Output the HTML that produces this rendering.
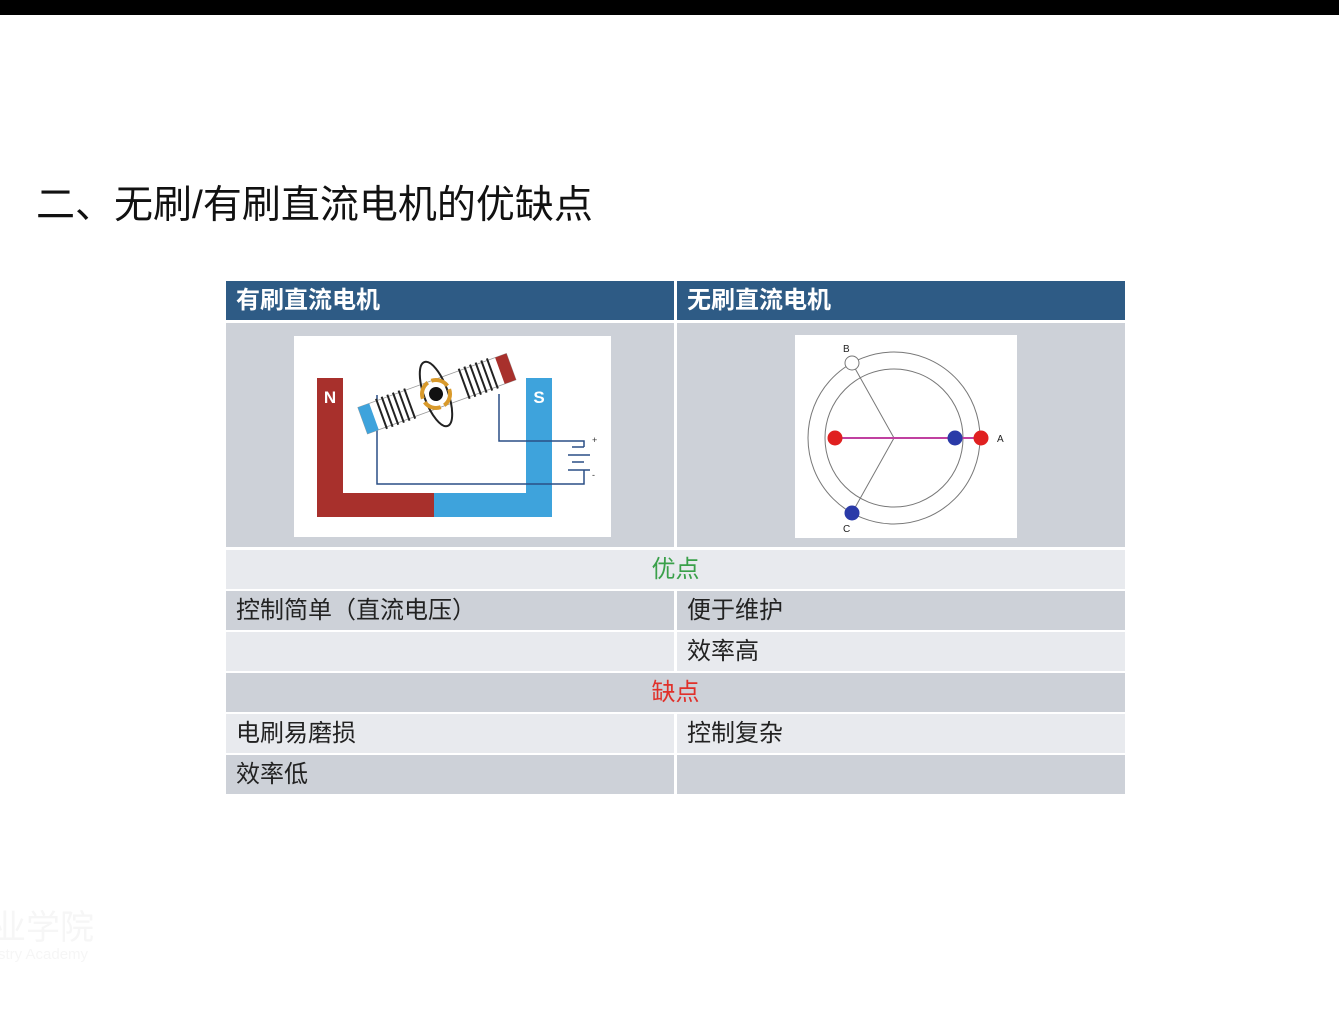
<!DOCTYPE html>
<html><head><meta charset="utf-8"><style>
body{margin:0;width:1339px;height:1023px;background:#fff;position:relative;overflow:hidden;font-family:"Liberation Sans","Noto Sans CJK SC",sans-serif}
.a{position:absolute}
.c{position:absolute;box-sizing:border-box;font-size:24px;color:#222;padding-left:10px;line-height:40px}
.l{background:#e8eaee}.d{background:#cdd1d8}
.h{background:#2e5b85;color:#fff;font-weight:bold;font-size:24px}
</style></head><body>
<div class="a" style="left:0;top:0;width:1339px;height:15px;background:#000"></div>
<div class="a" style="left:36px;top:179px;font-size:39px;color:#111;line-height:54px;white-space:nowrap">二、无刷/有刷直流电机的优缺点</div>

<div class="c h" style="left:226px;top:281px;width:448px;height:39px">有刷直流电机</div>
<div class="c h" style="left:677px;top:281px;width:448px;height:39px">无刷直流电机</div>
<div class="c d" style="left:226px;top:323px;width:448px;height:224px"></div>
<div class="c d" style="left:677px;top:323px;width:448px;height:224px"></div>

<div class="c l" style="left:226px;top:550px;width:899px;height:39px;text-align:center;padding:0;color:#3aa04a">优点</div>
<div class="c d" style="left:226px;top:591px;width:448px;height:39px">控制简单（直流电压）</div>
<div class="c d" style="left:677px;top:591px;width:448px;height:39px">便于维护</div>
<div class="c l" style="left:226px;top:632px;width:448px;height:39px"></div>
<div class="c l" style="left:677px;top:632px;width:448px;height:39px">效率高</div>
<div class="c d" style="left:226px;top:673px;width:899px;height:39px;text-align:center;padding:0;color:#e0302a">缺点</div>
<div class="c l" style="left:226px;top:714px;width:448px;height:39px">电刷易磨损</div>
<div class="c l" style="left:677px;top:714px;width:448px;height:39px">控制复杂</div>
<div class="c d" style="left:226px;top:755px;width:448px;height:39px">效率低</div>
<div class="c d" style="left:677px;top:755px;width:448px;height:39px"></div>

<svg class="a" style="left:0;top:0" width="1339" height="1023" viewBox="0 0 1339 1023">
<rect x="294" y="336" width="317" height="201" fill="#fff"/>
<rect x="317" y="378" width="26" height="139" fill="#a8302c"/>
<rect x="317" y="493" width="118" height="24" fill="#a8302c"/>
<rect x="434" y="493" width="118" height="24" fill="#3ea3dc"/>
<rect x="526" y="378" width="26" height="139" fill="#3ea3dc"/>
<text x="330" y="403" fill="#fff" font-size="17" font-weight="bold" text-anchor="middle">N</text>
<text x="539" y="403" fill="#fff" font-size="17" font-weight="bold" text-anchor="middle">S</text>
<path d="M377 395V484H584V470M499 394V441H584V447" fill="none" stroke="#2a4f85" stroke-width="1.5"/>
<path d="M572 447H584M568 455H590M572 462H584M568 470H590" stroke="#2a4f85" stroke-width="1.5"/>
<text x="592" y="443" font-size="9" fill="#333">+</text><text x="592" y="478" font-size="9" fill="#333">-</text>
<g transform="rotate(-20 436 394)">
<rect x="358" y="380" width="158" height="28" fill="#fff" stroke="#999" stroke-width="0.8"/>
<rect x="358" y="380" width="12" height="28" fill="#3ea3dc"/>
<rect x="504" y="380" width="12" height="28" fill="#a8302c"/>
<ellipse cx="436" cy="394" rx="12" ry="34" fill="none" stroke="#222" stroke-width="2"/>
<path d="M378 378v32M384 378v32M390 378v32M396 378v32M402 378v32M408 378v32M466 378v32M472 378v32M478 378v32M484 378v32M490 378v32M496 378v32" stroke="#222" stroke-width="2"/>
<circle cx="436" cy="394" r="14" fill="none" stroke="#d99a2b" stroke-width="4" stroke-dasharray="18 4"/>
<circle cx="436" cy="394" r="7" fill="#111"/>
</g>

<rect x="795" y="335" width="222" height="203" fill="#fff"/>
<circle cx="894" cy="438" r="86" fill="none" stroke="#777" stroke-width="1"/>
<circle cx="894" cy="438" r="69" fill="none" stroke="#777" stroke-width="1"/>
<path d="M852 363L894 438L852 513" fill="none" stroke="#777" stroke-width="1"/>
<line x1="835" y1="438" x2="981" y2="438" stroke="#c040a0" stroke-width="2"/>
<circle cx="852" cy="363" r="7" fill="#fff" stroke="#777"/>
<circle cx="835" cy="438" r="7.5" fill="#e02020"/>
<circle cx="955" cy="438" r="7.5" fill="#2a3aa8"/>
<circle cx="981" cy="438" r="7.5" fill="#e02020"/>
<circle cx="852" cy="513" r="7.5" fill="#2a3aa8"/>
<text x="843" y="352" font-size="10" fill="#222">B</text>
<text x="997" y="442" font-size="10" fill="#222">A</text>
<text x="843" y="532" font-size="10" fill="#222">C</text>
</svg>
<div class="a" style="left:-8px;top:900px;font-size:34px;color:#f6f6f6">业学院</div>
<div class="a" style="left:-2px;top:946px;font-size:15px;color:#f6f6f6">stry Academy</div>
</body></html>
